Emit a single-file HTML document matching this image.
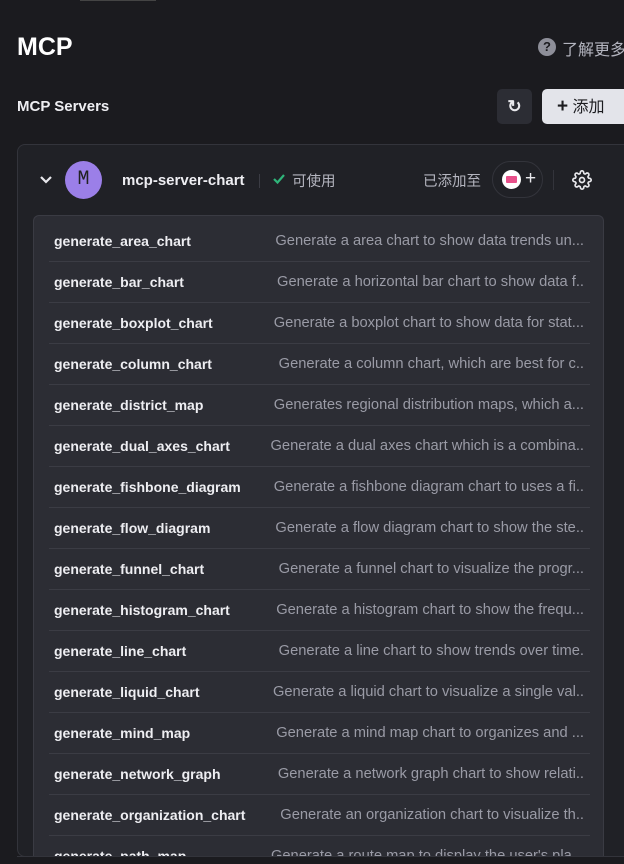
<!DOCTYPE html>
<html><head><meta charset="utf-8"><style>
*{margin:0;padding:0;box-sizing:border-box}
body{width:624px;height:864px;overflow:hidden;background:#1b1b1f;font-family:"Liberation Sans","Noto Sans CJK SC",sans-serif;color:#e8e8ec;position:relative}
.a{position:absolute}
.row{position:absolute;left:49px;width:541px;height:41px;border-bottom:1px solid #3b3c44}
.row .n{position:absolute;left:5px;top:12px;font-size:14px;font-weight:bold;color:#eeeef2}
.row .d{position:absolute;right:6px;top:12px;font-size:14.7px;color:#9a9ba6;white-space:nowrap}
</style></head><body>
<div class="a" style="left:80px;top:0;width:76px;height:1px;background:#444"></div>
<div class="a" style="left:17px;top:33px;font-size:25px;font-weight:bold;color:#fff">MCP</div>
<div class="a" style="left:538px;top:38px;width:18px;height:18px;border-radius:50%;background:#8e8f99;color:#1b1b1f;font-size:13px;font-weight:bold;text-align:center;line-height:18px">?</div>
<div class="a" style="left:562px;top:36px;font-size:16px;color:#b4b5bf;white-space:nowrap">了解更多</div>
<div class="a" style="left:17px;top:98px;font-size:15px;font-weight:bold;color:#eeeef2">MCP Servers</div>
<div class="a" style="left:497px;top:89px;width:35px;height:35px;border-radius:5px;background:#2c2d34;color:#e8e8ec;text-align:center;line-height:35px;font-size:17px;font-weight:bold">↻</div>
<div class="a" style="left:542px;top:89px;width:90px;height:35px;border-radius:5px;background:#e3e4ea;color:#1b1b1f;font-size:16px;line-height:35px;padding-left:15px"><b style="font-size:19px">+</b> 添加</div>
<div class="a" style="left:17px;top:144px;width:620px;height:713px;border:1px solid #33343b;border-radius:8px;background:#202126"></div>
<svg class="a" style="left:39px;top:175px" width="14" height="10" viewBox="0 0 14 10"><path d="M2 2l5 5 5-5" fill="none" stroke="#e8e8ec" stroke-width="2.2"/></svg>
<div class="a" style="left:65px;top:161px;width:37px;height:38px;border-radius:50%;background:#9b7fe8;color:#222;text-align:center;line-height:38px;font-size:20px;font-family:'Liberation Mono',monospace">M</div>
<div class="a" style="left:122px;top:172px;font-size:15px;font-weight:bold;color:#eeeef2">mcp-server-chart</div>
<div class="a" style="left:259px;top:174px;width:1px;height:14px;background:#3b3c44"></div>
<svg class="a" style="left:272px;top:173px" width="14" height="12" viewBox="0 0 14 12"><path d="M2 6l3.5 3.5L12 2" fill="none" stroke="#2fb57a" stroke-width="2.2"/></svg>
<div class="a" style="left:292px;top:170px;font-size:14.5px;color:#b4b5bf">可使用</div>
<div class="a" style="left:423px;top:170px;font-size:14.5px;color:#b4b5bf">已添加至</div>
<div class="a" style="left:492px;top:161px;width:51px;height:37px;border-radius:19px;border:1px solid #33343b"></div>
<div class="a" style="left:502px;top:170px;width:19px;height:19px;border-radius:50%;background:#fff"><div style="margin:6px 4px;width:11px;height:7px;background:#e8508a;border-radius:1px"></div></div>
<div class="a" style="left:525px;top:169px;font-size:19px;color:#e8e8ec;line-height:20px">+</div>
<div class="a" style="left:553px;top:170px;width:1px;height:20px;background:#33343b"></div>
<svg class="a" style="left:572px;top:170px" width="20" height="20" viewBox="0 0 24 24" fill="none" stroke="#e8e8ec" stroke-width="2"><circle cx="12" cy="12" r="3"/><path d="M19.4 15a1.650 1.65 0 0 0 .33 1.82l.06.06a2 2 0 1 1-2.830 2.83l-.06-.06a1.65 1.65 0 0 0-1.820-.33 1.65 1.65 0 0 0-1 1.51V21a2 2 0 1 1-4 0v-.09A1.65 1.65 0 0 0 9 19.4a1.65 1.65 0 0 0-1.82.33l-.06.06a2 2 0 1 1-2.83-2.83l.06-.06A1.65 1.65 0 0 0 4.6 15a1.65 1.65 0 0 0-1.51-1H3a2 2 0 1 1 0-4h.09A1.65 1.65 0 0 0 4.6 9a1.65 1.65 0 0 0-.33-1.820l-.06-.06a2 2 0 1 1 2.83-2.83l.06.06A1.65 1.65 0 0 0 9 4.6 1.65 1.65 0 0 0 10 3.09V3a2 2 0 1 1 4 0v.09a1.65 1.65 0 0 0 1 1.51 1.65 1.65 0 0 0 1.82-.33l.06-.06a2 2 0 1 1 2.83 2.83l-.06.06A1.65 1.65 0 0 0 19.4 9a1.65 1.65 0 0 0 1.51 1H21a2 2 0 1 1 0 4h-.09a1.65 1.65 0 0 0-1.510 1z"/></svg>
<div class="a" style="left:33px;top:215px;width:571px;height:642px;border:1px solid #3a3b43;border-bottom:none;border-radius:6px 6px 0 0;background:#2c2d34"></div>
<div class="a" style="left:0;top:0;width:624px;height:857px;overflow:hidden">
<div class="row" style="top:221px"><span class="n">generate_area_chart</span><span class="d">Generate a area chart to show data trends un...</span></div>
<div class="row" style="top:262px"><span class="n">generate_bar_chart</span><span class="d">Generate a horizontal bar chart to show data f..</span></div>
<div class="row" style="top:303px"><span class="n">generate_boxplot_chart</span><span class="d">Generate a boxplot chart to show data for stat...</span></div>
<div class="row" style="top:344px"><span class="n">generate_column_chart</span><span class="d">Generate a column chart, which are best for c..</span></div>
<div class="row" style="top:385px"><span class="n">generate_district_map</span><span class="d">Generates regional distribution maps, which a...</span></div>
<div class="row" style="top:426px"><span class="n">generate_dual_axes_chart</span><span class="d">Generate a dual axes chart which is a combina..</span></div>
<div class="row" style="top:467px"><span class="n">generate_fishbone_diagram</span><span class="d">Generate a fishbone diagram chart to uses a fi..</span></div>
<div class="row" style="top:508px"><span class="n">generate_flow_diagram</span><span class="d">Generate a flow diagram chart to show the ste..</span></div>
<div class="row" style="top:549px"><span class="n">generate_funnel_chart</span><span class="d">Generate a funnel chart to visualize the progr...</span></div>
<div class="row" style="top:590px"><span class="n">generate_histogram_chart</span><span class="d">Generate a histogram chart to show the frequ...</span></div>
<div class="row" style="top:631px"><span class="n">generate_line_chart</span><span class="d">Generate a line chart to show trends over time.</span></div>
<div class="row" style="top:672px"><span class="n">generate_liquid_chart</span><span class="d">Generate a liquid chart to visualize a single val..</span></div>
<div class="row" style="top:713px"><span class="n">generate_mind_map</span><span class="d">Generate a mind map chart to organizes and ...</span></div>
<div class="row" style="top:754px"><span class="n">generate_network_graph</span><span class="d">Generate a network graph chart to show relati..</span></div>
<div class="row" style="top:795px"><span class="n">generate_organization_chart</span><span class="d">Generate an organization chart to visualize th..</span></div>
<div class="row" style="top:836px;border:none"><span class="n">generate_path_map</span><span class="d">Generate a route map to display the user's pla...</span></div>
</div>
<div class="a" style="left:17px;top:856px;width:610px;height:1px;background:#33343b"></div>
</body></html>
